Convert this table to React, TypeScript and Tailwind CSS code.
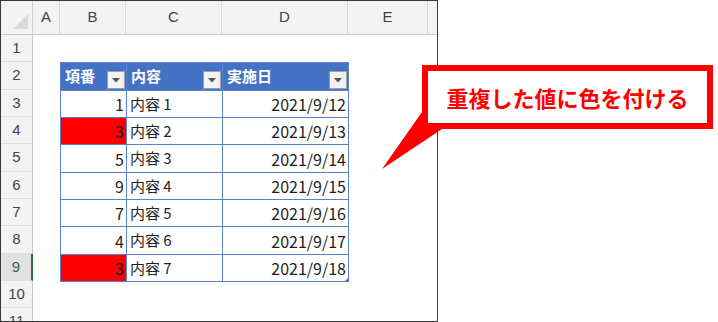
import React from "react";

const jp = { fontFamily: '"Noto Sans CJK JP", "Noto Sans", sans-serif' };
const latin = { fontFamily: '"Liberation Sans", Arial, sans-serif' };

const rowHeights = [27, 28, 27, 27, 28, 27, 27, 28, 27, 27, 27];

type Row = { no: number; name: string; date: string; dup: boolean };
const rows: Row[] = [
  { no: 1, name: "内容 1", date: "2021/9/12", dup: false },
  { no: 3, name: "内容 2", date: "2021/9/13", dup: true },
  { no: 5, name: "内容 3", date: "2021/9/14", dup: false },
  { no: 9, name: "内容 4", date: "2021/9/15", dup: false },
  { no: 7, name: "内容 5", date: "2021/9/16", dup: false },
  { no: 4, name: "内容 6", date: "2021/9/17", dup: false },
  { no: 3, name: "内容 7", date: "2021/9/18", dup: true },
];

function FilterButton() {
  return (
    <div className="mb-[1px] mr-[1px] flex h-[18px] w-[18px] shrink-0 items-center justify-center self-end border border-[#a0a0a0] bg-[#f2f2f2]">
      <svg width="8" height="5" viewBox="0 0 8 5">
        <path d="M0 0 H8 L4 4.5 Z" fill="#555" />
      </svg>
    </div>
  );
}

function HeaderCell({ label }: { label: string }) {
  return (
    <div className="flex items-stretch bg-[#4472c4]">
      <span
        className="flex flex-1 items-center pl-[4px] text-[15px] font-bold text-white"
        style={jp}
      >
        {label}
      </span>
      <FilterButton />
    </div>
  );
}

function DataTable() {
  return (
    <div className="grid w-[289px] grid-cols-[65px_95px_125px] grid-rows-[27px_26px_26px_27px_26px_26px_27px_26px] gap-px bg-[#5b82cf] p-px">
      <HeaderCell label="項番" />
      <HeaderCell label="内容" />
      <HeaderCell label="実施日" />
      {rows.map((r, i) => (
        <React.Fragment key={i}>
          <div
            className={`flex items-center justify-end pr-[2px] text-[16px] text-[#1e1e1e] ${
              r.dup ? "bg-[#ff0000]" : "bg-white"
            }`}
            style={jp}
          >
            {r.no}
          </div>
          <div
            className="flex items-center bg-white pl-[3px] text-[15px] text-[#1e1e1e]"
            style={jp}
          >
            {r.name}
          </div>
          <div
            className="relative flex items-center justify-end bg-white pr-[2px] text-[16px] text-[#1e1e1e]"
            style={jp}
          >
            {r.date}
            {i === rows.length - 1 && (
              <svg
                className="absolute bottom-[-1px] right-[-1px]"
                width="5"
                height="5"
                viewBox="0 0 5 5"
              >
                <path d="M5 0 V5 H0 Z" fill="#4472c4" />
              </svg>
            )}
          </div>
        </React.Fragment>
      ))}
    </div>
  );
}

function Sheet() {
  const cols = [
    { label: "A", w: "w-[27px]" },
    { label: "B", w: "w-[66px]" },
    { label: "C", w: "w-[96px]" },
    { label: "D", w: "w-[126px]" },
    { label: "E", w: "w-[80px]" },
  ];
  return (
    <div className="flex h-[322px] w-[438px] shrink-0 flex-col overflow-hidden border border-[#3a3a3a] bg-white">
      {/* column letters */}
      <div className="flex h-[34px] shrink-0 border-b border-[#c8c8c8] bg-[#f3f3f3]">
        <div className="flex w-[32px] shrink-0 items-end justify-end border-r border-[#d0d0d0] pb-[5px] pr-[4px]">
          <svg width="15" height="15" viewBox="0 0 15 15">
            <path d="M15 0 V15 H0 Z" fill="#dadada" />
          </svg>
        </div>
        {cols.map((c) => (
          <div
            key={c.label}
            className={`flex ${c.w} shrink-0 items-center justify-center border-r border-[#d9d9d9] text-[15px] text-[#444]`}
            style={latin}
          >
            {c.label}
          </div>
        ))}
        <div className="flex-1" />
      </div>
      {/* body */}
      <div className="flex flex-1 overflow-hidden">
        <div className="flex w-[32px] shrink-0 flex-col border-r border-[#c8c8c8] bg-[#f3f3f3]">
          {rowHeights.map((h, i) => {
            const active = i === 8;
            return (
              <div
                key={i}
                className={`flex shrink-0 items-center justify-center border-b border-[#dcdcdc] text-[15px] ${
                  active
                    ? "mr-[-1px] border-r-2 border-r-[#217346] bg-[#e1e1e1] text-[#217346]"
                    : "text-[#444]"
                }`}
                style={{ ...latin, height: h }}
              >
                {i + 1}
              </div>
            );
          })}
        </div>
        <div className="flex-1 pl-[27px] pt-[27px]">
          <DataTable />
        </div>
      </div>
    </div>
  );
}

function Callout() {
  return (
    <>
      <svg
        className="absolute left-0 top-0"
        width="718"
        height="322"
        viewBox="0 0 718 322"
      >
        <path d="M422 112 L382 169 L442 129 L422 129 Z" fill="#ff0000" />
      </svg>
      <div
        className="absolute left-[422px] top-[65px] flex h-[64px] w-[291px] items-center justify-center border-[6px] border-[#ff0000] bg-white text-[22px] font-bold text-[#ff0000]"
        style={jp}
      >
        重複した値に色を付ける
      </div>
    </>
  );
}

export default function App() {
  return (
    <div className="relative h-[322px] w-[718px] overflow-hidden bg-white">
      <Sheet />
      <Callout />
    </div>
  );
}
